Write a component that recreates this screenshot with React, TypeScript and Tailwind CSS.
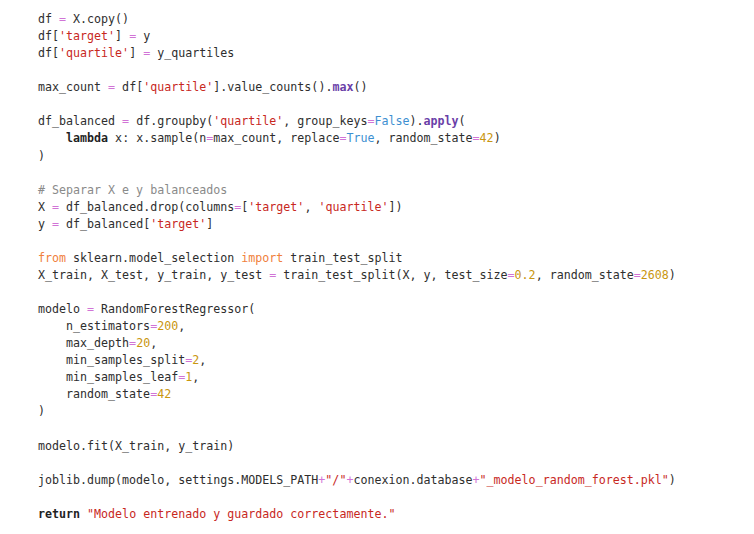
import React from 'react';

type Tok = [string, string?];

const C = {
  op: 'text-[#d174d6]',
  str: 'text-[#c8281e]',
  num: 'text-[#c9960f]',
  bool: 'text-[#3d8fd1]',
  kw: 'text-[#f0803c]',
  bold: 'font-bold text-[#1f1f1f]',
  fn: 'font-bold text-[#6a3fa8]',
  cm: 'text-[#8a8a8a]',
};

const eq: Tok = ['=', C.op];

const lines: Tok[][] = [
  [['df '], eq, [' X.copy()']],
  [['df['], ["'target'", C.str], ['] '], eq, [' y']],
  [['df['], ["'quartile'", C.str], ['] '], eq, [' y_quartiles']],
  [],
  [['max_count '], eq, [' df['], ["'quartile'", C.str], [']'], ['.value_counts().'], ['max', C.fn], ['()']],
  [],
  [['df_balanced '], eq, [' df.groupby('], ["'quartile'", C.str], [', group_keys'], eq, ['False', C.bool], [').'], ['apply', C.fn], ['(']],
  [['    '], ['lambda', C.bold], [' x: x.sample(n'], eq, ['max_count, replace'], eq, ['True', C.bool], [', random_state'], eq, ['42', C.num], [')']],
  [[')']],
  [],
  [['# Separar X e y balanceados', C.cm]],
  [['X '], eq, [' df_balanced.drop(columns'], eq, ['['], ["'target'", C.str], [', '], ["'quartile'", C.str], ['])']],
  [['y '], eq, [' df_balanced['], ["'target'", C.str], [']']],
  [],
  [['from', C.kw], [' sklearn.model_selection '], ['import', C.kw], [' train_test_split']],
  [['X_train, X_test, y_train, y_test '], eq, [' train_test_split(X, y, test_size'], eq, ['0.2', C.num], [', random_state'], eq, ['2608', C.num], [')']],
  [],
  [['modelo '], eq, [' RandomForestRegressor(']],
  [['    n_estimators'], eq, ['200', C.num], [',']],
  [['    max_depth'], eq, ['20', C.num], [',']],
  [['    min_samples_split'], eq, ['2', C.num], [',']],
  [['    min_samples_leaf'], eq, ['1', C.num], [',']],
  [['    random_state'], eq, ['42', C.num]],
  [[')']],
  [],
  [['modelo.fit(X_train, y_train)']],
  [],
  [['joblib.dump(modelo, settings.MODELS_PATH'], ['+', C.op], ['"/"', C.str], ['+', C.op], ['conexion.database'], ['+', C.op], ['"_modelo_random_forest.pkl"', C.str], [')']],
  [],
  [['return', C.bold], [' '], ['"Modelo entrenado y guardado correctamente."', C.str]],
];

export default function App() {
  return (
    <div className="w-[754px] h-[534px] bg-white overflow-hidden">
      <pre className="pl-[38px] pt-[11px] font-['DejaVu_Sans_Mono',monospace] text-[11.65px] leading-[17.07px] text-[#2e2e2e]">
        {lines.map((line, i) => (
          <div key={i} className="h-[17.07px] whitespace-pre">
            {line.map(([t, cls], j) => (
              <span key={j} className={cls}>{t}</span>
            ))}
          </div>
        ))}
      </pre>
    </div>
  );
}
